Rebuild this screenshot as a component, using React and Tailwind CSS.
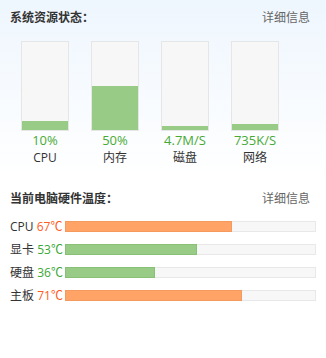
const font = { fontFamily: '"Open Sans", "Noto Sans CJK SC", sans-serif' };

const usage = [
  { value: '10%', label: 'CPU', pct: 10 },
  { value: '50%', label: '内存', pct: 50 },
  { value: '4.7M/S', label: '磁盘', pct: 4 },
  { value: '735K/S', label: '网络', pct: 7 },
];

const temps = [
  { label: 'CPU', temp: 67, hot: true },
  { label: '显卡', temp: 53, hot: false },
  { label: '硬盘', temp: 36, hot: false },
  { label: '主板', temp: 71, hot: true },
];

function Header({ title }) {
  return (
    <div className="flex justify-between items-center pl-[10px] pr-[16px] text-[12px] leading-[16px]">
      <span className="font-bold text-[#333]">{title}</span>
      <span className="text-[#666]">详细信息</span>
    </div>
  );
}

export default function App() {
  return (
    <div
      className="w-[326px] h-[358px] bg-linear-to-b from-[#eef6fe] to-white to-50% overflow-hidden"
      style={font}
    >
      <div className="pt-[10px]">
        <Header title="系统资源状态：" />
      </div>

      {/* 资源柱状图 */}
      <div className="flex gap-[22px] pl-[21px] mt-[15px]">
        {usage.map((u) => (
          <div key={u.label} className="w-[48px] flex flex-col items-center">
            <div className="w-[48px] h-[90px] border border-[#e6e6e6] bg-[#f7f7f7] flex items-end">
              <div className="w-full bg-[#98cc86]" style={{ height: `${u.pct}%` }} />
            </div>
            <div className="mt-[1px] text-[13px] leading-[16px] text-[#48aa34]">{u.value}</div>
            <div className="mt-[2px] text-[12px] leading-[16px] text-[#333]">{u.label}</div>
          </div>
        ))}
      </div>

      <div className="mt-[25px]">
        <Header title="当前电脑硬件温度：" />
      </div>

      {/* 温度条 */}
      <div className="mt-[14px] pl-[10px] pr-[10px] flex flex-col gap-[12px]">
        {temps.map((t) => (
          <div key={t.label} className="flex items-center h-[11px]">
            <div className="w-[55px] shrink-0 text-[12px] leading-[16px] whitespace-nowrap">
              <span className="text-[#333]">{t.label} </span>
              <span className={t.hot ? 'text-[#ff5a1e]' : 'text-[#3aa836]'}>{t.temp}℃</span>
            </div>
            <div className="flex-1 h-[11px] border border-[#e8e8e8] bg-[#f7f7f7] relative">
              <div
                className={
                  t.hot
                    ? 'absolute -left-px -top-px -bottom-px bg-[#ffa466] border border-[#f59a5e]'
                    : 'absolute -left-px -top-px -bottom-px bg-[#98cc86] border border-[#88c176]'
                }
                style={{ width: `${t.temp}%` }}
              />
            </div>
          </div>
        ))}
      </div>
    </div>
  );
}
